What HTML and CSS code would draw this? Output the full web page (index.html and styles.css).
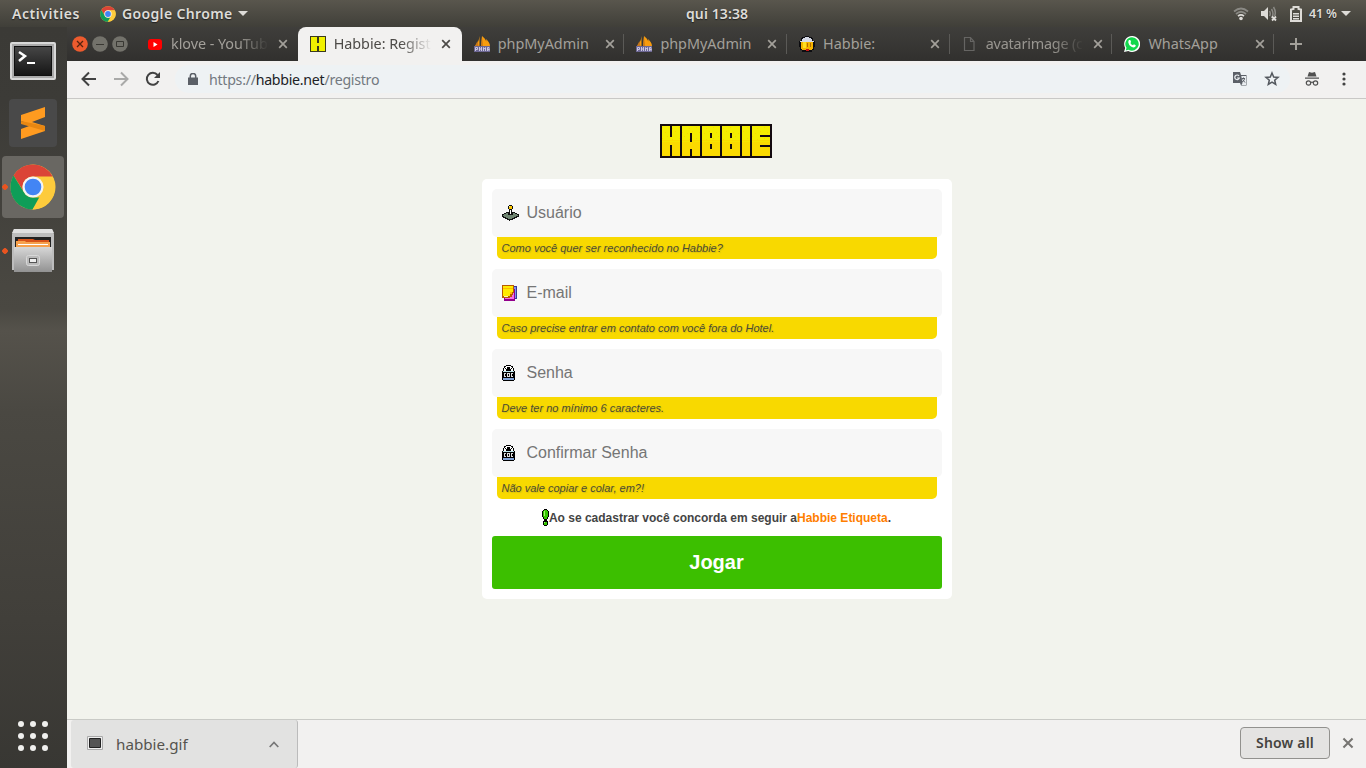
FILE: index.html
```html
<!DOCTYPE html>
<html lang="pt-BR">
<head>
<meta charset="utf-8">
<title>Habbie: Registro</title>
<link rel="stylesheet" href="styles.css">
</head>
<body>
<svg class="defs" width="0" height="0">
  <defs>
    <linearGradient id="steel" x2="0" y2="1"><stop stop-color="#d7d7d7"/><stop offset="1" stop-color="#929292"/></linearGradient>
    <linearGradient id="screen" x2="0" y2="1"><stop stop-color="#464646"/><stop offset="1" stop-color="#161616"/></linearGradient>
    <pattern id="dots" width="17" height="11" patternUnits="userSpaceOnUse"><path fill="#f9d900" d="M2 3h1v1h-1zM7 1h1v1h-1zM12 4h1v1h-1zM5 8h1v1h-1zM10 9h1v1h-1zM15 7h1v1h-1z"/></pattern>
  </defs>
  <symbol id="chrome" viewBox="0 0 48 48">
    <circle cx="24" cy="24" r="23.5" fill="#fdcb3c"/>
    <path fill="#db4437" d="M24 .5A23.5 23.5 0 0 1 44.5 13H24A11 11 0 0 0 13.8 28L3.7 12A23.5 23.5 0 0 1 24 .5z"/>
    <path fill="#0f9d58" d="M3.7 12L14.5 29.5A11 11 0 0 0 24 35h9.500L23.500 47.500A23.500 23.500 0 0 1 3.700 12z"/>
    <path fill="#fdcb3c" d="M33.500 29.500L23.500 47.500A23.500 23.500 0 0 0 44.500 13.500H24z"/>
    <circle cx="24" cy="24" r="11" fill="#f4f4f4"/><circle cx="24" cy="24" r="8.700" fill="#4285f4"/>
  </symbol>
  <symbol id="close" viewBox="0 0 10 10"><path d="M1.200 1.200l7.600 7.600M8.800 1.200l-7.600 7.600" fill="none" stroke="currentColor" stroke-width="1.700"/></symbol>
  <symbol id="pma" viewBox="0 0 16 16">
    <path fill="#f89c0e" d="M5.500 0v10H1C3 8 5 5 5.500 0zM8 0c4 3 5 6 5 10H7zM12 3c2 2 4 4 4 7h-3z"/><path fill="#c97818" d="M3.500 5l1 5H1zM8 1l1 9H7z"/>
    <path fill="#6c6793" d="M0 10h16v6H0z"/>
    <path fill="none" stroke="#c9c5e2" d="M1.500 15v-3.500h2v2h-2M5.500 11v4M5.500 13h2M7.500 11v4M9.500 15v-3.500l1 1.500 1-1.500v3.500M13.500 15v-3.500h1.500v3.500M13.500 13.500h2"/>
  </symbol>
  <symbol id="lock" viewBox="0 0 14 16">
    <path fill="#000" d="M4 0h5v1h2v2h1v3h1v9h-1v1H1v-1H0V6h1V3h1V1h2z"/>
    <path fill="#fff" d="M4 1h5v1h1v1h1v3H9V4H8V3H5v1H4v2H2V3h1V2h1z"/><path fill="#000" d="M3 3h1v1H3zM9 3h1v1H9zM5 2h3v1H5z"/>
    <path fill="#bfe8ef" d="M1 6h11v1H1z"/><path fill="#ddd" d="M1 8h11v4H1z"/>
    <path fill="#000" d="M1 8h1v4H1zM4 8h1v4H4zM8 8h1v4H8zM11 8h1v4h-1zM3 9h1v2H3zM6 9h1v2H6zM10 9h1v2h-1z"/>
    <path fill="#82a4da" d="M1 13h11v2H1z"/>
  </symbol>
</svg>

<header class="topbar">
  <span class="activities">Activities</span>
  <svg class="app-icon" width="16" height="16"><use href="#chrome"/></svg>
  <span class="app-name">Google Chrome</span>
  <svg class="caret" width="10" height="5"><path d="M0 0h10L5 5z"/></svg>
  <span class="clock">qui 13:38</span>
  <div class="status">
    <svg width="16" height="16" viewBox="0 0 16 16"><g fill="none" stroke-width="1.700"><path stroke="#8a8984" d="M1 5.500Q8-.5 15 5.500M3 8Q8 3.500 13 8"/><path stroke="#dedcd8" d="M5 10.200Q8 7.700 11 10.200"/></g><circle cx="8" cy="12.500" r="1.800" fill="#dedcd8"/></svg>
    <svg class="volume" width="18" height="16" viewBox="0 0 18 16"><path fill="#dedcd8" d="M1 5h3l4-4v13l-4-4H1z"/><path fill="none" stroke="#8a8984" stroke-width="1.500" d="M9.500 5q1.500 3 0 5M11.500 3q3 5 0 9M13.500 1q3 5 1 9"/><path stroke="#dedcd8" stroke-width="1.800" d="M12 10.500l4 4m0-4l-4 4"/></svg>
    <svg width="12" height="16" viewBox="0 0 12 16"><path fill="none" stroke="#dedcd8" stroke-width="2" d="M1 15V3.500L3.500 3V1h5v2l2.500.5V15z"/><path fill="#dedcd8" d="M3 7h6v1.500H3zM3 9.500h6V11H3zM3 12h6v1.500H3z"/></svg>
    <span class="percent">41 %</span>
    <svg class="caret" width="10" height="5" viewBox="0 0 10 5"><path d="M0 0h10L5 5z"/></svg>
  </div>
</header>

<div class="desktop">
  <nav class="launcher">
    <div class="tile terminal">
      <svg width="46" height="38" viewBox="0 0 46 38"><rect width="46" height="38" rx="2" fill="#d9d9d9"/><rect x="2" y="2" width="42" height="34" fill="#aaa"/><rect x="4" y="4" width="38" height="30" fill="#101010"/><rect x="5" y="5" width="36" height="28" fill="url(#screen)"/><path fill="none" stroke="#fff" stroke-width="2.500" d="M9 10l6 4-6 5"/><path fill="#fff" d="M17 20h8v2h-8z"/></svg>
    </div>
    <div class="tile sublime">
      <svg width="48" height="48" viewBox="0 0 48 48"><rect width="48" height="48" rx="4" fill="#494949"/><path fill="#ff9b20" d="M12 16l24-8v10l-13 5 13 4v5l-24 8V30l11-4-11-4z"/><path fill="#e88712" d="M12 22l24 5v5L12 25z"/></svg>
    </div>
    <div class="tile active"><svg width="46" height="46"><use href="#chrome"/></svg></div>
    <div class="tile files">
      <svg width="42" height="44" viewBox="0 0 42 44"><path fill="#bdbdbd" d="M2 0h38l2 5v36H0V5z"/><path fill="#e0e0e0" d="M2 0h38l2 4H0z"/><path fill="#222" d="M3 8h36v10H3z"/><path fill="#d75319" d="M6 10h15l2 1h14v7H5z"/><path fill="#f6a14d" d="M4 12h9l1 1h24v6H4z"/><path fill="#fff" d="M6 15h30v1H6z"/><path fill="url(#steel)" d="M2 18h38v25H2z"/><rect x="14.500" y="26.500" width="13" height="10" rx="2" fill="#bbb" stroke="#d8d8d8"/><rect x="17.500" y="29.500" width="7" height="4" fill="#eee" stroke="#555"/></svg>
    </div>
    <svg class="apps" width="30" height="30" viewBox="0 0 30 30" fill="#f0f0ee"><circle cx="3" cy="3" r="3"/><circle cx="15" cy="3" r="3"/><circle cx="27" cy="3" r="3"/><circle cx="3" cy="15" r="3"/><circle cx="15" cy="15" r="3"/><circle cx="27" cy="15" r="3"/><circle cx="3" cy="27" r="3"/><circle cx="15" cy="27" r="3"/><circle cx="27" cy="27" r="3"/></svg>
  </nav>

  <section class="browser">
    <div class="tabstrip">
      <div class="window-buttons">
        <svg width="16" height="16"><circle cx="8" cy="8" r="7.800" fill="#ed5b2e"/><path stroke="#56230f" stroke-width="1.300" d="M5 5l6 6m0-6l-6 6"/></svg>
        <svg width="16" height="16"><circle cx="8" cy="8" r="7.800" fill="#73726b"/><path stroke="#393833" d="M4 8.500h8"/></svg>
        <svg width="16" height="16"><circle cx="8" cy="8" r="7.800" fill="#73726b"/><path fill="none" stroke="#393833" d="M4.500 5.500h7v5h-7z"/></svg>
      </div>
      <div class="tab no-line"><svg class="fav" width="16" height="16"><rect x="1" y="3" width="14" height="11" rx="3" fill="#f00"/><path fill="#fff" d="M6.500 6l4 2.500-4 2.500z"/></svg><span class="title fade">klove - YouTub</span><svg class="x"><use href="#close"/></svg></div>
      <div class="tab current"><svg class="fav" width="16" height="16" shape-rendering="crispEdges"><path fill="#3b3a1f" d="M0 0h16v16H0z"/><path fill="#f1f100" d="M1 1h6v6h2V1h6v14H9v-5H7v5H1z"/></svg><span class="title fade">Habbie: Regist</span><svg class="x"><use href="#close"/></svg></div>
      <div class="tab"><svg class="fav" width="16" height="16"><use href="#pma"/></svg><span class="title">phpMyAdmin</span><svg class="x"><use href="#close"/></svg></div>
      <div class="tab"><svg class="fav" width="16" height="16"><use href="#pma"/></svg><span class="title">phpMyAdmin</span><svg class="x"><use href="#close"/></svg></div>
      <div class="tab"><svg class="fav" width="16" height="16" shape-rendering="crispEdges"><path fill="#0c0c10" d="M6 0h4v1h3v1h1v3h2v6h-1v3h-2v2H3v-2H1v-3H0V5h2V2h1V1h3z"/><path fill="#d5d9e5" d="M6 1h4v1h2v1h1v2h2v1H1V5h2V3h1V2h2z"/><path fill="#f5b400" d="M2 6h12v7h-1v1H3v-1H2z"/><path fill="#ffdf20" d="M4 6h3v6H4z"/><path fill="#b36c00" d="M8 7h1v4H8zM11 7h1v4h-1z"/><path fill="#c71818" d="M7 13h3v2H7z"/></svg><span class="title">Habbie:</span><svg class="x"><use href="#close"/></svg></div>
      <div class="tab"><svg class="fav" width="16" height="16"><path fill="none" stroke="#666563" stroke-width="1.200" d="M2.500 1.500h6l3.500 4v9H2.500zM8.500 1.500v4H12"/></svg><span class="title fade dim">avatarimage (c</span><svg class="x"><use href="#close"/></svg></div>
      <div class="tab last"><svg class="fav" width="16" height="16" viewBox="0 0 16 16"><path fill="#fff" d="M8 0a8 8 0 1 1-3.700 15L0 16l1.200-4A8 8 0 0 1 8 0z"/><path fill="#12d74c" d="M8 1.300a6.700 6.700 0 1 1-3.500 12.400l-2.800.8.800-2.700A6.700 6.700 0 0 1 8 1.300z"/><path fill="#fff" d="M5 4l1.300 0 .8 2-.7.900q.8 1.600 2.600 2.400l.9-1 1.900 1q0 2-2 2.200Q5.500 11 4.300 6.400 4.200 5 5 4z"/></svg><span class="title">WhatsApp</span><svg class="x"><use href="#close"/></svg></div>
      <svg class="new-tab" width="12" height="12"><path stroke="currentColor" stroke-width="2" d="M6 0v12M0 6h12"/></svg>
    </div>

    <div class="toolbar">
      <svg width="16" height="16" fill="none" stroke="#424242" stroke-width="2"><path d="M15 8H2M8 1.500L1.500 8 8 14.500"/></svg>
      <svg width="16" height="16" fill="none" stroke="#a9a9a8" stroke-width="2"><path d="M1 8h13M8 1.500L14.500 8 8 14.500"/></svg>
      <svg width="16" height="16" fill="none" stroke="#424242" stroke-width="2"><path d="M13.400 10A6 6 0 1 1 12.500 4"/><path fill="#424242" stroke="none" d="M15 1v6H9z"/></svg>
      <div class="omnibox">
        <svg width="10" height="12"><path fill="#5b6067" d="M0 4.500h10V12H0z"/><path fill="none" stroke="#5b6067" stroke-width="1.500" d="M2.300 5V3a2.700 2.500 0 0 1 5.400 0v2"/></svg>
        <span class="url">https://<b>habbie.net</b>/registro</span>
        <svg class="translate" width="16" height="16"><path fill="#5b6067" d="M1 1h7l1 3h5.500v10.500H9L8 12H1z"/><path fill="#e9edf0" d="M9.300 5H14v9H9.500l1-2z"/><path fill="none" stroke="#e9edf0" stroke-width="1.200" d="M7 5a2.300 2.300 0 1 0 .3 2H5"/><path fill="none" stroke="#5b6067" d="M9.500 7.500H13M11.500 6.500v1M12.500 8Q12 10 10 11M10.500 8.500l2.500 3"/></svg>
        <svg width="16" height="16"><path fill="none" stroke="#53585e" stroke-width="1.500" d="M8 2l1.700 4.100 4.300.3-3.300 2.800 1 4.300L8 11.200l-3.700 2.300 1-4.300L2 6.400l4.300-.3z"/></svg>
      </div>
      <svg class="incognito" width="14" height="14"><path fill="#505050" d="M4 0l3 .7L10 0l1.500 4.500h-9zM0 5.500h14v1.200H0z"/><g fill="none" stroke="#505050" stroke-width="1.200"><circle cx="3.500" cy="11" r="2.200"/><circle cx="10.500" cy="11" r="2.200"/><path d="M5.700 10.500q1.300-.6 2.600 0"/></g></svg>
      <svg class="menu" width="4" height="14" fill="#424242"><circle cx="2" cy="2" r="1.600"/><circle cx="2" cy="7" r="1.600"/><circle cx="2" cy="12" r="1.600"/></svg>
    </div>

    <main class="page">
      <svg class="logo" width="112" height="34" shape-rendering="crispEdges" role="img" aria-label="Habbie"><path fill="#140a10" d="M0 0h112v34H0z"/><path fill="#f4ee00" d="M2 2h108v14H2z"/><path fill="#fbda00" d="M2 16h108v16H2z"/><path fill="#f7e500" d="M2 17h108v1H2z"/><path fill="url(#dots)" d="M2 3h108v13H2z"/><path fill="#140a10" d="M20 0h2v34h-2zM40 0h2v34h-2zM60 0h2v34h-2zM80 0h2v34h-2zM90 0h2v34h-2zM10 0h2v13h-2zM10 21h2v13h-2zM30 9h2v9h-2zM30 25h2v9h-2zM50 9h2v5h-2zM50 20h2v5h-2zM70 9h2v5h-2zM70 20h2v5h-2zM100 11h10v2h-10zM100 21h10v2h-10z"/></svg>
      <form class="card">
        <label class="field"><svg width="25" height="16" shape-rendering="crispEdges"><path fill="#111" d="M7 0h3v1h1v3h-1v3h3v1h2v1h2v3h-2v1h-2v1h-2v1H8v1H7v-1H5v-1H3v-1H1v-1H0V9h2V8h2V7h3V4H6V1h1z"/><path fill="#ffc800" d="M7 1h3v3H7z"/><path fill="#fff7a0" d="M7 1h1v1H7z"/><path fill="#6f8571" d="M4 8h2v2h5V8h2v1h2v1h1v1h-2v1h-2v1h-2v1H6v-1H4v-1H2v-1H1v-1h1V9h2z"/><path fill="#fff" d="M8 5h1v4H8z"/></svg><input placeholder="Usuário"></label>
        <p class="hint">Como você quer ser reconhecido no Habbie?</p>
        <label class="field"><svg width="25" height="16" shape-rendering="crispEdges"><path fill="#7894ef" d="M10 1h5v13h-5z"/><path fill="none" stroke="#39369b" d="M10 1.500h4.500v12H12"/><path fill="#f56ce4" d="M3 5h9v10H3z"/><path fill="#92008c" d="M2 12h1v2h9V4h1v12H2z"/><path fill="#b85b00" d="M0 0h12v8h-1v2h-1v2H8v1H0z"/><path fill="#ffeb00" d="M1 1h10v6H8v4H1z"/><path fill="#ffb900" d="M1 3h10v1H1zM8 7h2v2H8z"/><path fill="#fff8ac" d="M2 11h4v1H2z"/></svg><input placeholder="E-mail"></label>
        <p class="hint">Caso precise entrar em contato com você fora do Hotel.</p>
        <label class="field"><svg width="25" height="16" shape-rendering="crispEdges"><use href="#lock" width="14" height="16"/></svg><input placeholder="Senha"></label>
        <p class="hint">Deve ter no mínimo 6 caracteres.</p>
        <label class="field"><svg width="25" height="16" shape-rendering="crispEdges"><use href="#lock" width="14" height="16"/></svg><input placeholder="Confirmar Senha"></label>
        <p class="hint">Não vale copiar e colar, em?!</p>
        <p class="terms"><svg width="7" height="17" shape-rendering="crispEdges"><path fill="#000" d="M2 0h3v1h1v1h1v6H6v2H5v2h1v4H5v1H2v-1H1v-4h1v-2H1V8H0V2h1V1h1z"/><path fill="#35c800" d="M2 1h3v1h1v6H5v2H2V8H1V2h1zM2 13h3v3H2z"/><path fill="#a2f270" d="M2 2h1v5H2zM2 13h1v1H2z"/></svg>Ao se cadastrar você concorda em seguir a<a>Habbie Etiqueta</a>.</p>
        <button class="play" type="button">Jogar</button>
      </form>
    </main>

    <footer class="downloads">
      <div class="download">
        <svg width="16" height="14"><path fill="#efefef" stroke="#aaa" d="M.5.5h15v13H.5z"/><path fill="#555" stroke="#222" d="M2.500 2.500h11v9h-11z"/></svg>
        <span class="file">habbie.gif</span>
        <svg class="chevron" width="10" height="7"><path fill="none" stroke="#777" stroke-width="1.700" d="M.7 6L5 1.500 9.300 6"/></svg>
      </div>
      <button class="show-all" type="button">Show all</button>
      <svg class="dismiss"><use href="#close"/></svg>
    </footer>
  </section>
</div>
</body>
</html>
```
FILE: styles.css
```css
* { box-sizing: border-box; }
body { margin: 0; width: 1366px; height: 768px; overflow: hidden; display: flex; flex-direction: column; font-family: "Noto Sans", "Open Sans", sans-serif; }
svg { flex: none; display: block; }
.defs { position: absolute; }
.topbar { height: 27px; flex: none; display: flex; align-items: center; padding: 0 15px 0 12px; background: linear-gradient(#59564d, #403f39); color: #dedcd8; font-size: 14px; font-weight: 600; line-height: 26px; text-shadow: 0 1px 1px #222; }
.activities { width: 68px; letter-spacing: .55px; }
.app-icon { margin: 0 6px 0 20px; }
.app-name { width: 111px; white-space: nowrap; letter-spacing: .35px; }
.caret { fill: #dedcd8; margin-left: 5px; }
.clock { margin-left: 438px; width: 64px; white-space: nowrap; letter-spacing: .1px; }
.status { margin-left: auto; display: flex; align-items: center; }
.volume { margin: 0 12px 0 11px; }
.percent { font-size: 12.500px; margin-left: 7px; width: 27px; white-space: nowrap; letter-spacing: -.2px; }
.desktop { flex: 1; display: flex; min-height: 0; }
.launcher { width: 67px; flex: none; display: flex; flex-direction: column; align-items: center; padding: 12px 1px 17px 0; background: linear-gradient(#3b3a36, #3c3b37 10%, #494741 35%, #4a4842 38%, #55524b 41%, #4a4842 52%, #413f3a 80%, #383733); }
.tile { width: 62px; height: 62px; display: flex; align-items: center; justify-content: center; border-radius: 4px; flex: none; }
.terminal { height: 43px; }
.sublime { height: 48px; margin-top: 17px; }
.active { margin-top: 9px; background: #696762; }
.files { margin-top: 2px; }
.active, .files { background-image: radial-gradient(circle at 3px 31px, #e95420 2.500px, transparent 3px); }
.apps { margin-top: auto; }
.browser { flex: 1; min-width: 0; display: flex; flex-direction: column; }
.tabstrip { height: 34px; flex: none; display: flex; align-items: center; background: linear-gradient(#3f3e3b, #31302e); }
.window-buttons { width: 68px; display: flex; gap: 4px; padding-left: 5px; flex: none; }
.tab { width: 162.700px; height: 34px; flex: none; display: flex; align-items: center; padding-left: 12px; color: #a3a09a; font-size: 14.400px; background: linear-gradient(#5b5a57, #5b5a57) 100% 7px / 1px 20px no-repeat; }
.tab.no-line { background: none; }
.tab.last { width: 162px; }
.tab.current { width: 164px; color: #4c4a47; background: #f2f1f0; border-radius: 8px 8px 0 0; }
.title { margin-left: 8px; width: 98px; overflow: hidden; white-space: nowrap; line-height: 30px; }
.fade { mask-image: linear-gradient(90deg, #000 68%, transparent); letter-spacing: -.05px; }
.dim { opacity: .9; letter-spacing: -.2px; }
.x { width: 10px; height: 10px; margin-left: 9px; }
.new-tab { color: #a3a09a; margin-left: 16px; }
.toolbar { height: 38px; flex: none; display: flex; align-items: center; gap: 16px; padding: 0 20px 2px 14px; background: #f2f1f0; border-bottom: 1px solid #c9c8c6; }
.omnibox { height: 28px; flex: 1; margin-left: -2px; display: flex; align-items: center; padding: 0 10px 0 13px; border-radius: 14px; background: #eef2f4; }
.url { margin-left: 11px; font-size: 14.200px; color: #737980; letter-spacing: -.28px; line-height: 30px; padding-top: 2px; }
.url b { font-weight: 400; color: #202124; }
.translate { margin-left: auto; margin-right: 16px; }
.incognito { margin-left: -1px; }
.menu { margin-left: 7px; }
.page { flex: 1; min-height: 0; background: #f2f3ed; display: flex; flex-direction: column; align-items: center; padding-top: 25px; font-family: "Liberation Sans", Arial, sans-serif; }
.logo { margin-right: 1px; }
.card { width: 470px; height: 420px; margin: 21px 0 0 1px; padding: 10px; border-radius: 5px; background: #fff; }
.field { height: 48px; display: flex; align-items: center; padding-left: 9.500px; border-radius: 5px; background: #f7f7f7; }
.field input { flex: 1; height: 40px; border: 0; padding: 0; background: none; outline: 0; font: 16px "Liberation Sans", Arial, sans-serif; }
.field input::placeholder { color: #757575; opacity: 1; }
.hint { height: 22px; margin: 0 5px 10px; padding-left: 4.500px; border-radius: 0 0 5px 5px; background: #f8d900; color: #4b4b33; font-size: 11px; line-height: 22px; font-style: italic; text-shadow: 1px 1px 1px rgba(120,110,60,.25); }
.terms { height: 17px; margin: 0 1px 10px 0; display: flex; justify-content: center; align-items: center; font-size: 12px; font-weight: bold; color: #444; }
.terms a { color: #ff7e00; }
.play { width: 450px; height: 53px; display: block; border: 0; border-radius: 3px; background: #3cbf00; color: #fff; font: bold 20px "Liberation Sans", Arial, sans-serif; padding: 0 1px 0 0; }
.downloads { height: 49px; flex: none; display: flex; align-items: center; border-top: 1px solid #c9cac6; padding: 0 12px 0 4px; background: #f2f1f0; }
.download { width: 227px; height: 48px; display: flex; align-items: center; padding: 0 18px 0 16px; border-right: 1px solid #bbb; border-radius: 3px; background: #e2e2e1; color: #55534f; }
.download svg:first-child { margin-bottom: 3px; }
.file { margin-left: 13px; font-size: 15.200px; line-height: 48px; }
.chevron { margin-left: auto; }
.show-all { width: 90px; height: 32px; margin-left: auto; margin-bottom: 2px; border: 1px solid #92918e; border-radius: 4px; background: #e4e3e2; color: #45433f; font: 600 14px "Noto Sans", sans-serif; letter-spacing: .2px; padding: 0 0 2px; }
.dismiss { width: 12px; height: 12px; margin: 0 0 2px 12px; color: #777572; }
```
